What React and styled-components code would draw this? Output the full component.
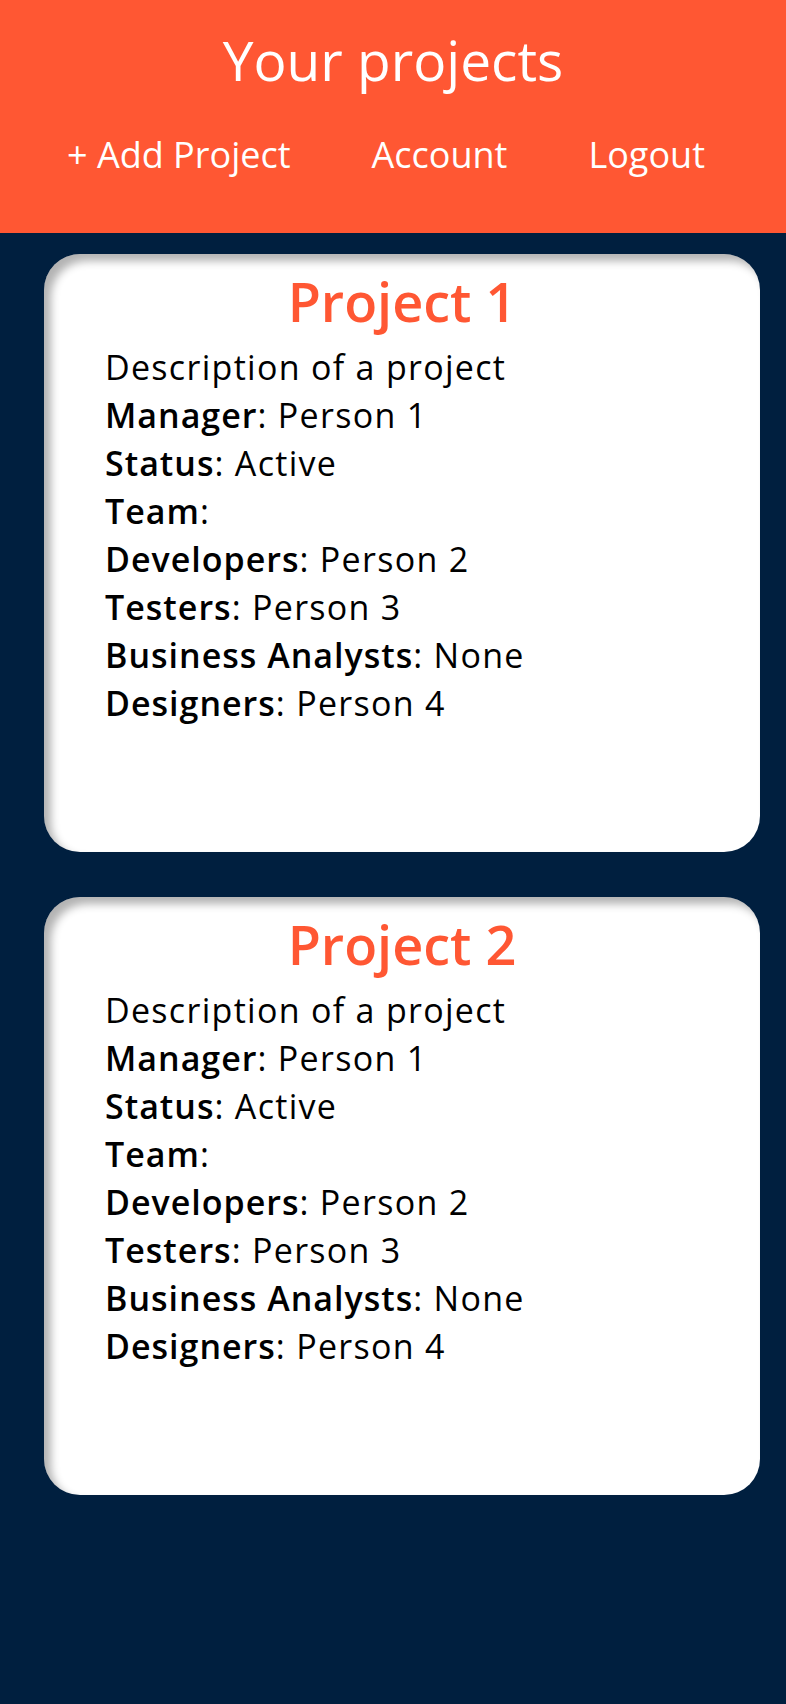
import React from "react";
import styled, { createGlobalStyle } from "styled-components";

const GlobalStyle = createGlobalStyle`
  html, body {
    margin: 0;
    padding: 0;
    background: #001f3f;
    font-family: "Open Sans", "Noto Sans", sans-serif;
  }
`;

const Page = styled.div`
  min-height: 1704px;
  background: #001f3f;
  display: flex;
  flex-direction: column;
`;

const Header = styled.header`
  background: #ff5733;
  height: 233px;
  box-sizing: border-box;
  padding-top: 22px;
  color: white;
  display: flex;
  flex-direction: column;
  gap: 33px;
`;

const Title = styled.h1`
  margin: 0;
  text-align: center;
  font-size: 55px;
  font-weight: 400;
  line-height: 76px;
`;

const Nav = styled.nav`
  display: flex;
  justify-content: space-between;
  align-items: baseline;
  padding: 0 81px 0 67px;
`;

const NavLink = styled.a`
  color: white;
  text-decoration: none;
  font-size: 36px;
  line-height: 48px;
`;

const List = styled.main`
  display: flex;
  flex-direction: column;
  gap: 45px;
  padding: 21px 26px 0 44px;
`;

const Card = styled.section`
  background: white;
  border-radius: 36px;
  height: 598px;
  box-sizing: border-box;
  padding: 14px 61px 0;
  display: flex;
  flex-direction: column;
  box-shadow: inset 7px 7px 9px rgba(0, 0, 0, 0.3);
`;

const CardTitle = styled.h2`
  margin: 0 0 9px;
  text-align: center;
  color: #ff5733;
  font-size: 54px;
  font-weight: 600;
  line-height: 66px;
`;

const Line = styled.div`
  color: #000;
  font-size: 34px;
  line-height: 48px;
  letter-spacing: 1.3px;
`;

const Label = styled.b`
  font-weight: 600;
  letter-spacing: 1px;
`;

const projects = [
  { name: "Project 1" },
  { name: "Project 2" },
];

const fields = [
  ["Manager", "Person 1"],
  ["Status", "Active"],
  ["Team", ""],
  ["Developers", "Person 2"],
  ["Testers", "Person 3"],
  ["Business Analysts", "None"],
  ["Designers", "Person 4"],
];

function ProjectCard({ name }) {
  return (
    <Card>
      <CardTitle>{name}</CardTitle>
      <Line>Description of a project</Line>
      {fields.map(([label, value]) => (
        <Line key={label}>
          <Label>{label}</Label>:{value ? " " + value : ""}
        </Line>
      ))}
    </Card>
  );
}

export default function App() {
  return (
    <Page>
      <GlobalStyle />
      <Header>
        <Title>Your projects</Title>
        <Nav>
          <NavLink href="#">+ Add Project</NavLink>
          <NavLink href="#">Account</NavLink>
          <NavLink href="#">Logout</NavLink>
        </Nav>
      </Header>
      <List>
        {projects.map((p) => (
          <ProjectCard key={p.name} name={p.name} />
        ))}
      </List>
    </Page>
  );
}
